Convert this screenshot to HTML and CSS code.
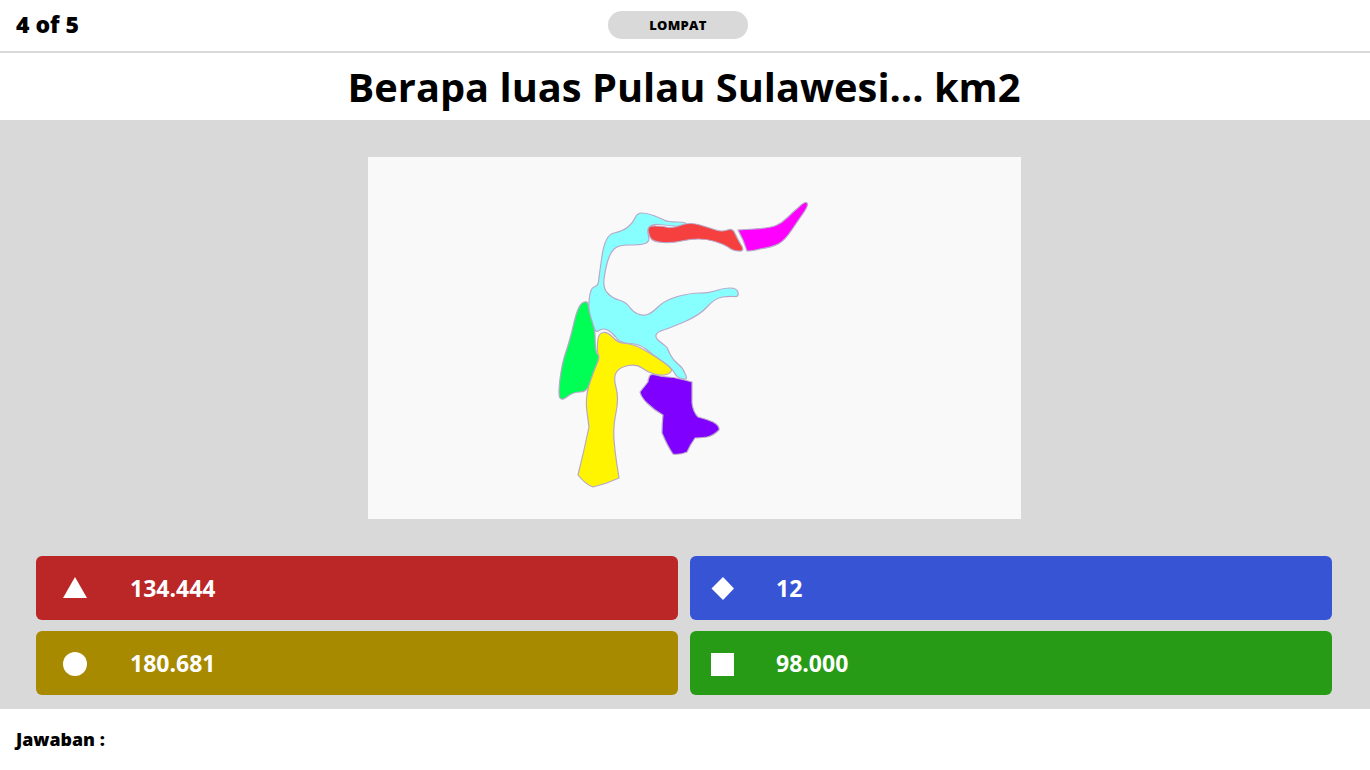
FILE: index.html
```html
<!DOCTYPE html>
<html lang="id">
<head>
    <meta charset="UTF-8">
    <meta name="viewport" content="width=device-width, initial-scale=1.0">
    <title>Kuis</title>
    <link rel="stylesheet" href="styles.css">
</head>
<body>
    <header class="topbar">
        <span class="counter">4 of 5</span>
        <button class="skip" type="button">LOMPAT</button>
    </header>

    <h1 class="question">Berapa luas Pulau Sulawesi... km2</h1>

    <main class="stage">
        <div class="picture">
            <svg class="map" viewBox="368 157 653 362" role="img" aria-label="Peta Pulau Sulawesi">
                <g class="map-parts">
                    <path fill="#88ffff" d="M635,218 Q637,213 642,213 Q647,213 653.5,215.5 Q660,218 664,220 Q668,222 677,222 Q688,222 685,225 Q683,227 674,226 Q665,225 658.5,224.5 Q652,224 649.5,227 Q647,230 648.5,236 Q650,242 645,243.5 Q640,245 629,245 Q618,245 614,249 Q610,253 607.5,261.5 Q605,270 604,279 Q603,288 607.5,293 Q612,298 619,300 Q626,302 629.5,307 Q633,312 638,314 Q643,316 647.5,314.5 Q652,313 658.5,306.5 Q665,300 677.5,296.5 Q690,293 700,293 Q710,293 716.5,290.5 Q723,288 730,288 Q737,288 738,292.5 Q739,297 734.5,296.5 Q730,296 722.5,297 Q715,298 707.5,306.5 Q700,315 685,321.5 Q670,328 663.5,330 Q657,332 656,335 Q655,338 661,342.5 Q667,347 667.5,348.5 Q668,350 670.5,355 Q673,360 678,364 Q683,368 685,373.5 Q689,381 682,378.5 Q677,378 674.5,373 Q672,368 662.5,361.5 Q653,355 646.5,349.5 Q640,344 630,343.5 Q620,343 616,337.5 Q612,332 607.5,330 Q603,328 600,330 Q597,332 596,331 Q595,330 591.5,322.5 Q588,315 589,301.5 Q590,288 594,287 Q598,286 598.5,281.5 Q599,277 602,256 Q605,235 614,233 Q623,231 628,227 Q633,223 635,218 Z"/>
                    <path fill="#f64040" d="M648,230 Q648,225 656,226 Q663,226 668,227.5 Q673,228 681.5,225 Q690,222 700,225 Q710,228 716,230 Q722,232 727.5,230 Q733,228 735,233.5 Q737,238 740.5,244 Q746,252 738.5,251 Q733,251 728,247 Q723,244 715,241.5 Q707,239 698.5,239 Q690,239 681.5,241 Q673,243 663,242.5 Q652,242 650,237 Q648,233 648,230 Z"/>
                    <path fill="#ff00ff" d="M738,230 L754,229 Q770,228 776,225.5 Q782,223 787.5,217.5 Q793,212 799,207 Q805,201 807,203 Q809,205 803,213.5 Q797,222 791,231 Q785,240 779,243.5 Q773,247 760,249 Q752,251 747,251 L743,240 Z"/>
                    <path fill="#00ff55" d="M583,302.5 Q588,300 588.5,306 Q589,312 592,321 Q595,330 595,335 Q595,340 595.5,346.5 Q596,353 598,355 Q600,357 596,367 Q592,377 589.5,384.5 Q587,392 580,392 Q573,392 567.5,396.5 Q562,401 560,398 Q558,395 560,379 Q562,363 566,351.5 Q570,340 574,322.5 Q578,305 583,302.5 Z"/>
                    <path fill="#fff500" d="M597.5,343 Q598,333 603,332.5 Q608,332 613,337.5 Q618,343 625.5,343.5 Q633,344 641.5,348.5 Q650,353 661,360.5 Q672,368 671.5,370.5 Q671,373 666.5,374.5 Q662,376 654.5,374 Q647,372 642,368 Q637,364 628.5,365.5 Q620,367 616.5,372 Q613,377 616,387.5 Q619,398 616,412.5 Q613,427 614,440 Q615,453 617,465 L619,478 Q606,484 593,487 Q585,484 578,475 Q584,451 589,427 Q587,412 587,412.5 Q585,398 589,385.5 Q593,373 596.5,365 Q600,357 598.5,355 Q597,353 597.5,343 Z"/>
                    <path fill="#8000ff" d="M649,377.5 Q650,373 656,375 Q662,377 667.500,377 Q673,377 682.500,379.500 L692,382 Q692,393 692,403 Q693,412 698,417 Q706,419 713,422 Q720,426 719,430 Q713,436 707,437 Q700,438 695,438 Q690,445 687,452 Q680,455 673,454 Q668,447 662,433 Q662,424 663,415 Q654,410 647,403 Q641,397 640,392 Q644,387 648,382 Q648,380 649,377.5 Z"/>
                </g>
            </svg>
        </div>

        <div class="answers">
            <button class="answer answer-red" type="button">
                <svg class="shape" viewBox="0 0 24 26"><path d="M12 2 L24 23 L0 23 Z"/></svg>
                <span>134.444</span>
            </button>
            <button class="answer answer-blue" type="button">
                <svg class="shape" viewBox="0 0 24 26"><path d="M12 2 L23 13.500 L12 25 L0.500 13.500 Z"/></svg>
                <span>12</span>
            </button>
            <button class="answer answer-yellow" type="button">
                <svg class="shape" viewBox="0 0 24 26"><circle cx="12" cy="14" r="12"/></svg>
                <span>180.681</span>
            </button>
            <button class="answer answer-green" type="button">
                <svg class="shape" viewBox="0 0 24 26"><rect x="0" y="3" width="23" height="23"/></svg>
                <span>98.000</span>
            </button>
        </div>
    </main>

    <footer class="reply">Jawaban :</footer>
</body>
</html>
```

FILE: styles.css
```css
/* page */
html, body {
    height: 100%;
}

body {
    margin: 0;
    display: flex;
    flex-direction: column;
    overflow: hidden;
    font-family: "Open Sans", "Liberation Sans", sans-serif;
    background-color: #fff;
    color: #000;
}

/* top bar */
.topbar {
    height: 51px;
    flex: none;
    display: flex;
    align-items: center;
    justify-content: center;
    position: relative;
    border-bottom: 2px solid #d9d9d9;
}

.counter {
    position: absolute;
    left: 16px;
    top: 9px;
    font-size: 23px;
    line-height: 30px;
    font-weight: 800;
}

.skip {
    width: 140px;
    height: 28px;
    margin: 0 14px 2px 0;
    padding: 0;
    border: none;
    border-radius: 14px;
    background-color: #d9d9d9;
    color: #000;
    font-family: inherit;
    font-size: 13px;
    font-weight: 800;
    letter-spacing: 0.3px;
}

/* question */
.question {
    height: 67px;
    flex: none;
    margin: 0;
    padding-right: 2px;
    font-size: 39.8px;
    line-height: 67px;
    font-weight: 700;
    text-align: center;
}

/* gray area */
.stage {
    flex: 1;
    display: flex;
    flex-direction: column;
    padding: 37px 38px 14px 36px;
    background-color: #d9d9d9;
}

.picture {
    width: 653px;
    height: 362px;
    margin: 0 0 37px 332px;
    background-color: #f9f9f9;
}

.map {
    display: block;
    width: 100%;
    height: 100%;
}

.map-parts {
    filter: blur(0.4px);
}

.map-parts path {
    stroke: #b8a8c8;
    stroke-width: 1.2;
    stroke-linejoin: round;
}

/* answers */
.answers {
    display: grid;
    grid-template-columns: 1fr 1fr;
    grid-auto-rows: 64px;
    gap: 11px 12px;
}

.answer {
    display: flex;
    align-items: center;
    padding: 0 0 0 27px;
    border: none;
    border-radius: 6px;
    color: #fff;
    font-family: inherit;
    font-size: 23px;
    font-weight: 700;
    text-align: left;
}

.answer .shape {
    width: 24px;
    height: 26px;
    margin-right: 43px;
    flex: none;
    fill: #fff;
}

.answer-red {
    background-color: #bb2626;
}

.answer-yellow {
    background-color: #a78a00;
}

.answer-blue {
    padding-left: 21px;
    background-color: #3654d4;
}

.answer-green {
    padding-left: 21px;
    background-color: #279b16;
}

.answer-blue .shape,
.answer-green .shape {
    margin-right: 41px;
}

/* footer */
.reply {
    height: 61px;
    flex: none;
    box-sizing: border-box;
    padding: 18px 16px 0;
    font-size: 17.8px;
    line-height: 25px;
    font-weight: 800;
}
```
